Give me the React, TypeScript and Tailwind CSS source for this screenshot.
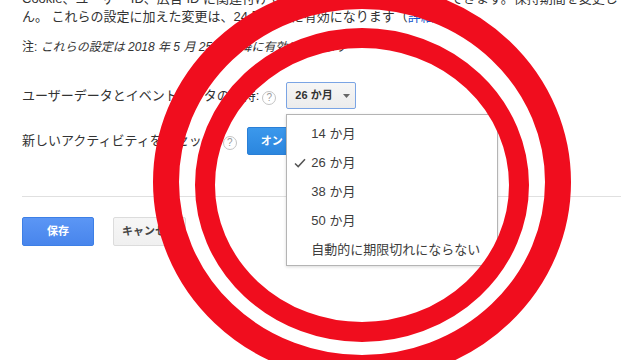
import React from "react";

const FONT = '"Liberation Sans", "Noto Sans CJK JP", sans-serif';

function Help() {
  return (
    <span className="inline-flex h-[14px] w-[14px] shrink-0 items-center justify-center rounded-full border border-[#c4c4c4] text-[10px] leading-none text-[#9a9a9a]">
      ?
    </span>
  );
}

function Check() {
  return (
    <svg width="12" height="10" viewBox="0 0 12 10" className="shrink-0">
      <path d="M1 5.5 L4.2 8.6 L11 1.2" fill="none" stroke="#555" strokeWidth="1.5" />
    </svg>
  );
}

export default function App() {
  const items = ["14 か月", "26 か月", "38 か月", "50 か月", "自動的に期限切れにならない"];
  return (
    <div
      className="relative h-[360px] w-[621px] overflow-hidden bg-white text-[#333]"
      style={{ fontFamily: FONT }}
    >
      <div className="flex flex-col pl-[22px]">
        <div className="-mt-[10px] text-[13px] leading-[18px]">
          <div className="whitespace-nowrap">
            Cookie、ユーザー ID、広告 ID に関連付けているデータの保持期間を変更できます。保持期間を変更しても問題はありませ
          </div>
          <div className="whitespace-nowrap">
            ん。 これらの設定に加えた変更は、24 時間後に有効になります（<span className="text-[#1155cc]">詳細</span>）
          </div>
        </div>

        <div className="mt-[12px] whitespace-nowrap text-[12px] leading-[18px]">
          注: <span className="italic">これらの設定は 2018 年 5 月 25 日以降に有効になります</span>
        </div>

        <div className="mt-[26px] flex h-[27px] items-center">
          <span className="whitespace-nowrap text-[13px]">ユーザーデータとイベントデータの保持:</span>
          <span className="ml-[3px]">
            <Help />
          </span>
          <div className="relative ml-[10px]">
            <div className="flex h-[27px] w-[70px] items-center rounded-[2px] border border-[#7aa4e4] bg-gradient-to-b from-[#f6f6f6] to-[#ececec] pl-[8px] text-[11px] font-bold text-[#333]">
              <span className="whitespace-nowrap">26 か月</span>
              <svg width="7" height="4" viewBox="0 0 7 4" className="ml-[10px]">
                <path d="M0 0 L7 0 L3.5 4 Z" fill="#666" />
              </svg>
            </div>
            <div className="absolute left-0 top-[32px] z-10 w-[212px] border border-[#b4b4b4] bg-white pb-[1px] pt-[4px] shadow-[0_1px_3px_rgba(0,0,0,0.15)]">
              {items.map((it, i) => (
                <div key={it} className="flex h-[29px] items-center text-[13px] text-[#3d3d3d]">
                  <span className="flex w-[24px] justify-start pl-[7px]">{i === 1 ? <Check /> : null}</span>
                  <span className="whitespace-nowrap">{it}</span>
                </div>
              ))}
            </div>
          </div>
        </div>

        <div className="mt-[18px] flex h-[28px] items-center">
          <span className="whitespace-nowrap text-[13px]">新しいアクティビティをリセット</span>
          <span className="ml-[8px]">
            <Help />
          </span>
          <div className="ml-[10px] flex h-[28px] w-[64px] items-center rounded-[2px] border border-[#2a7fd6] bg-gradient-to-b from-[#3b98ec] to-[#2b86de] pl-[13px] text-[11px] font-bold text-white">
            オン
          </div>
        </div>

        <div className="mt-[41px] h-px bg-[#e0e0e0]" />

        <div className="mt-[20px] flex gap-[19px]">
          <div className="flex h-[29px] w-[72px] items-center justify-center rounded-[2px] border border-[#3d7fe6] bg-gradient-to-b from-[#5b96f5] to-[#4885ec] text-[11px] font-bold text-white">
            保存
          </div>
          <div className="flex h-[29px] w-[73px] items-center justify-center rounded-[2px] border border-[#dcdcdc] bg-gradient-to-b from-[#f6f6f6] to-[#f0f0f0] text-[11px] font-bold text-[#444]">
            キャンセル
          </div>
        </div>
      </div>

      <svg
        className="pointer-events-none absolute left-0 top-0 z-20"
        width="621"
        height="360"
        viewBox="0 0 621 360"
      >
        <ellipse cx="362" cy="182" rx="196" ry="186" fill="none" stroke="#f00d1e" strokeWidth="26" />
        <ellipse cx="362" cy="185" rx="157" ry="147" fill="none" stroke="#f00d1e" strokeWidth="20" />
      </svg>
    </div>
  );
}
